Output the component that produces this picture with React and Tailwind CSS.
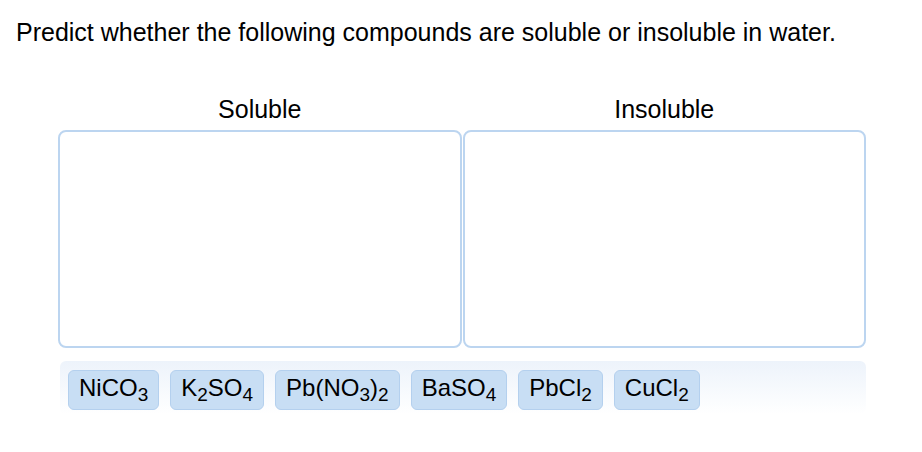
import React from 'react';

const compounds = [
    ['NiCO', '3'],
    ['K', '2', 'SO', '4'],
    ['Pb(NO', '3', ')', '2'],
    ['BaSO', '4'],
    ['PbCl', '2'],
    ['CuCl', '2'],
];

function Formula({ parts }) {
    // odd indexes are subscripts
    return (
        <span>
            {parts.map((p, i) =>
                i % 2 === 1
                    ? <span key={i} className="text-[19px] align-[-5px] leading-none">{p}</span>
                    : <span key={i}>{p}</span>
            )}
        </span>
    );
}

export default function App() {
    return (
        <div className="w-[922px] h-[452px] bg-white text-black font-['Liberation_Sans',Arial,sans-serif]">
            <h1 className="pt-[18px] pl-[16px] text-[25px] leading-[29px] font-normal">
                Predict whether the following compounds are soluble or insoluble in water.
            </h1>

            <div className="ml-[58px] w-[808px] mt-[48px]">
                <div className="grid grid-cols-2 gap-px">
                    <div className="text-center text-[25px] leading-[28px]">Soluble</div>
                    <div className="text-center text-[25px] leading-[28px]">Insoluble</div>
                </div>
                <div className="grid grid-cols-2 gap-px mt-[7px]">
                    <div className="h-[218px] border-2 border-[#bcd5f0] rounded-lg"></div>
                    <div className="h-[218px] border-2 border-[#bcd5f0] rounded-lg"></div>
                </div>
            </div>

            <div className="ml-[60px] w-[806px] mt-[13px] rounded-md bg-gradient-to-b from-[#edf3fb] to-white pl-2 pt-[9px] pb-1 flex gap-[11px]">
                {compounds.map((c, i) => (
                    <div key={i} className="h-10 px-[10px] flex items-center bg-[#c8def4] border border-[#b4d0ee] rounded-md text-[24px] leading-none">
                        <Formula parts={c} />
                    </div>
                ))}
            </div>
        </div>
    );
}
